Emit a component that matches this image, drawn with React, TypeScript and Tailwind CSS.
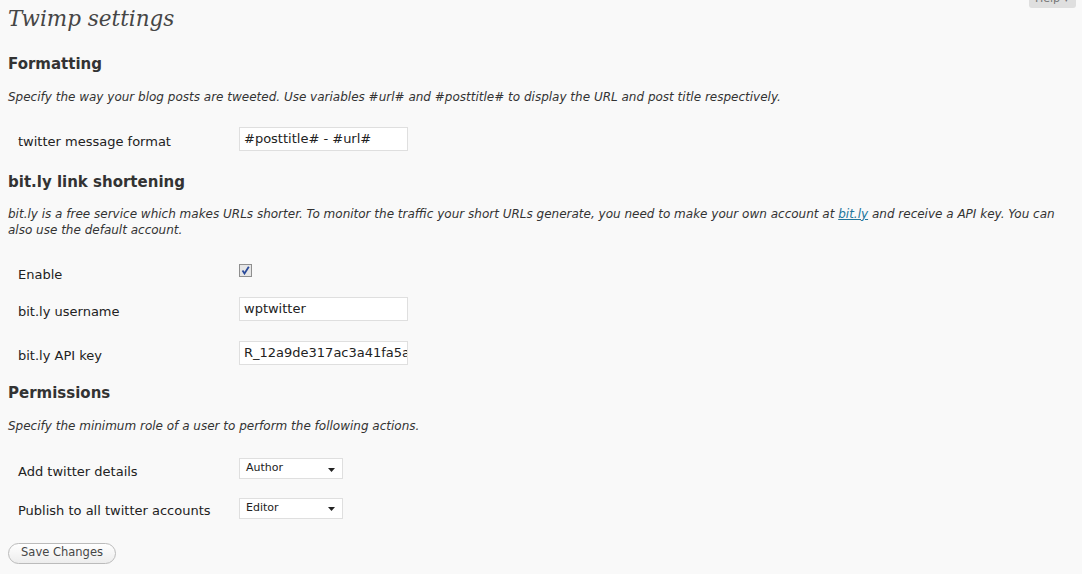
import type { ReactNode } from "react";

const sans = "font-['DejaVu_Sans',Verdana,sans-serif]";

function SectionTitle({ children, className = "" }: { children: ReactNode; className?: string }) {
  return <h3 className={`text-[15px] font-bold leading-[20px] text-[#333] ${className}`}>{children}</h3>;
}

function Description({ children, className = "" }: { children: ReactNode; className?: string }) {
  return <p className={`text-[12px] italic leading-[16px] text-[#333] ${className}`}>{children}</p>;
}

function Row({ label, children, className = "" }: { label: string; children: ReactNode; className?: string }) {
  return (
    <div className={`flex items-center ${className}`}>
      <label className="w-[231px] shrink-0 pl-[10px] pt-[5px] text-[13px] text-[#222]">{label}</label>
      {children}
    </div>
  );
}

function TextInput({ value }: { value: string }) {
  return (
    <div className="h-[24px] w-[169px] overflow-hidden whitespace-nowrap border border-[#dfdfdf] bg-white pl-[4px] text-[13px] leading-[22px] text-[#222]">
      {value}
    </div>
  );
}

function Select({ value }: { value: string }) {
  return (
    <div className="flex h-[21px] w-[104px] items-center justify-between border border-[#dfdfdf] bg-white pl-[6px] pr-[7px] text-[11px] text-[#222]">
      <span className="-mt-[1px]">{value}</span>
      <svg width="7" height="4" viewBox="0 0 7 4" className="mt-[2px]">
        <path d="M0 0h7L3.5 4z" fill="#222" />
      </svg>
    </div>
  );
}

function Checkbox() {
  return (
    <div className="-mt-[4px] flex h-[13px] w-[13px] items-center justify-center border border-[#8f8f8f] bg-[#e6e6e6]">
      <svg width="9" height="9" viewBox="0 0 9 9">
        <path d="M1.5 4.5l2 3L7.8 0.8" fill="none" stroke="#2a4a9a" strokeWidth="1.8" />
      </svg>
    </div>
  );
}

export default function App() {
  return (
    <div className={`relative min-h-screen bg-[#f9f9f9] px-[8px] ${sans}`}>
      {/* help tab pokes out of the top edge */}
      <div className="absolute right-[6px] top-0 h-[8px] w-[47px] overflow-hidden rounded-b-[3px] bg-[#dfdfdf]">
        <div className="-mt-[8px] pl-[6px] text-[11px] leading-[14px] text-[#777]">Help ▾</div>
      </div>

      <h2 className="h-[38px] font-['DejaVu_Serif',Georgia,serif] text-[21.5px] italic leading-[38px] text-[#464646]">
        Twimp settings
      </h2>

      <SectionTitle className="mt-[16px]">Formatting</SectionTitle>
      <Description className="mt-[15px]">
        Specify the way your blog posts are tweeted. Use variables #url# and #posttitle# to display the URL and post
        title respectively.
      </Description>
      <Row label="twitter message format" className="mt-[22px]">
        <TextInput value="#posttitle# - #url#" />
      </Row>

      <SectionTitle className="mt-[20px]">bit.ly link shortening</SectionTitle>
      <Description className="mt-[14px]">
        bit.ly is a free service which makes URLs shorter. To monitor the traffic your short URLs generate, you need to
        make your own account at{" "}
        <a href="#" className="text-[#21759b] underline">
          bit.ly
        </a>{" "}
        and receive a API key. You can also use the default account.
      </Description>
      <Row label="Enable" className="mt-[23px] h-[24px]">
        <Checkbox />
      </Row>
      <Row label="bit.ly username" className="mt-[12px]">
        <TextInput value="wptwitter" />
      </Row>
      <Row label="bit.ly API key" className="mt-[20px]">
        <TextInput value="R_12a9de317ac3a41fa5a8" />
      </Row>

      <SectionTitle className="mt-[17px]">Permissions</SectionTitle>
      <Description className="mt-[15px]">Specify the minimum role of a user to perform the following actions.</Description>
      <Row label="Add twitter details" className="mt-[23px]">
        <Select value="Author" />
      </Row>
      <Row label="Publish to all twitter accounts" className="mt-[15px]">
        <Select value="Editor" />
      </Row>

      <button className="mt-[22px] h-[21px] w-[108px] rounded-full border border-[#bbb] bg-gradient-to-b from-white to-[#ededed] text-[11.5px] text-[#464646]">
        Save Changes
      </button>
    </div>
  );
}
